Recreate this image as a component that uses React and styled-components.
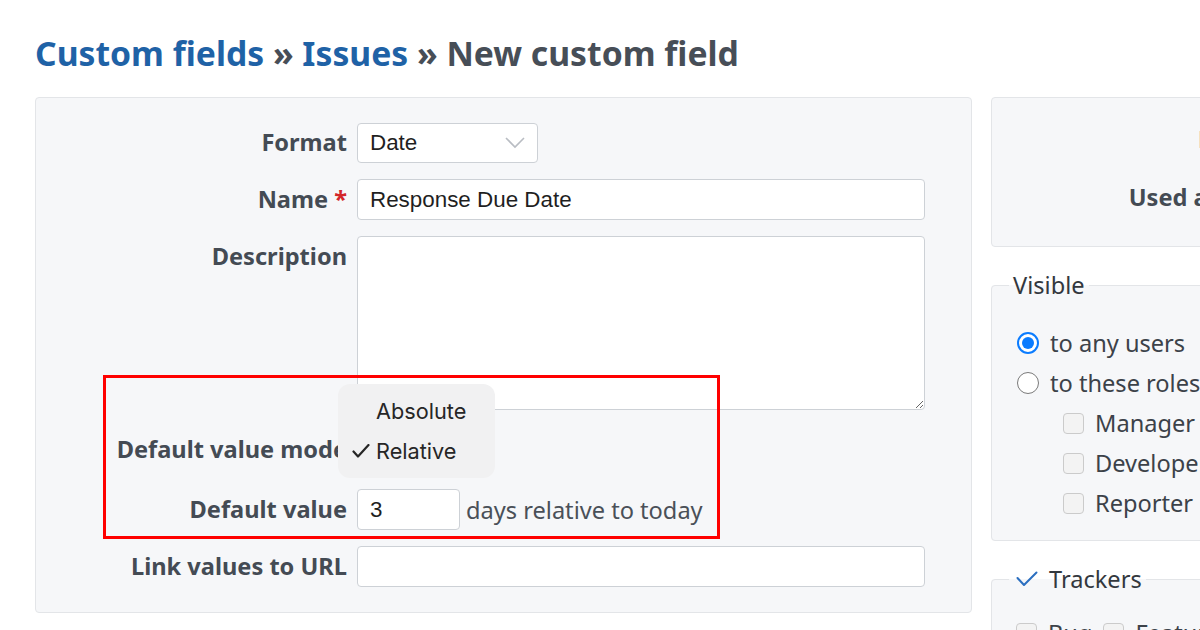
import React from "react";
import styled, { createGlobalStyle } from "styled-components";

const GlobalStyle = createGlobalStyle`
  html, body { margin: 0; padding: 0; background: #ffffff; }
  body {
    width: 1200px; height: 630px; overflow: hidden;
    font-family: "Noto Sans", "Open Sans", sans-serif;
    color: #3f464f;
  }
  * { box-sizing: border-box; }
`;

const Page = styled.div`
  padding: 33px 0 0 35px;
  width: 1600px;
`;

const Title = styled.h2`
  margin: 0 0 24px 0;
  font-family: "Noto Sans", sans-serif;
  font-weight: 700;
  font-size: 33.7px;
  line-height: 40px;
  color: #474e57;
  white-space: nowrap;
`;

const TitleLink = styled.a`
  color: #1f62a6;
  text-decoration: none;
`;

const Columns = styled.div`
  display: flex;
  align-items: flex-start;
  gap: 19px;
`;

const LeftBox = styled.div`
  position: relative;
  width: 937px;
  background: #f6f7f9;
  border: 1px solid #e3e5e8;
  border-radius: 4px;
  padding: 24px 46px 25px 0;
  display: flex;
  flex-direction: column;
  gap: 16px;
`;

const Row = styled.div`
  position: relative;
  display: flex;
  align-items: ${(p) => (p.$top ? "flex-start" : "center")};
  gap: 10px;
  min-height: ${(p) => p.$h || 40}px;
`;

const Label = styled.label`
  flex: 0 0 ${(p) => p.$w || 311}px;
  text-align: right;
  font-weight: 700;
  font-size: 23.6px;
  line-height: 41px;
  color: #444b54;
  white-space: nowrap;
`;

const Req = styled.span`
  color: #d3262a;
`;

const fieldBase = `
  height: 41px;
  background: #ffffff;
  border: 1px solid #cdd1d6;
  border-radius: 4px;
  font-family: "Liberation Sans", Arial, sans-serif;
  font-size: 22.4px;
  color: #1f1f1f;
  padding: 0 12px;
  outline: none;
`;

const TextInput = styled.input`
  ${fieldBase}
  flex: ${(p) => (p.$width ? `0 0 ${p.$width}px` : "1 1 auto")};
  width: ${(p) => (p.$width ? `${p.$width}px` : "auto")};
  min-width: 0;
`;

const TextArea = styled.textarea`
  ${fieldBase}
  flex: 1 1 auto;
  height: 174px;
  resize: vertical;
  padding: 8px 12px;
`;

const SelectBox = styled.div`
  ${fieldBase}
  flex: 0 0 ${(p) => p.$width}px;
  height: 40px;
  display: flex;
  align-items: center;
  justify-content: space-between;
  padding: 0 12px 0 12px;
`;

const Chevron = () => (
  <svg width="20" height="12" viewBox="0 0 20 12">
    <path d="M1 1 L10 10 L19 1" fill="none" stroke="#b9bdc3" strokeWidth="1.6" />
  </svg>
);

const Hint = styled.span`
  font-size: 23.6px;
  color: #4a5058;
  margin-left: -4px;
  white-space: nowrap;
`;

const Menu = styled.div`
  position: absolute;
  left: 302px;
  top: -42px;
  width: 157px;
  height: 94px;
  background: #f1f1f2;
  border-radius: 12px;
  padding: 7px 0;
  display: flex;
  flex-direction: column;
  z-index: 2;
`;

const MenuItem = styled.div`
  position: relative;
  height: 40px;
  display: flex;
  align-items: center;
  padding-left: 38px;
  font-family: Inter, "Liberation Sans", sans-serif;
  font-size: 21.7px;
  color: #262626;
`;

const MenuCheck = styled.svg`
  position: absolute;
  left: 14px;
  top: 13px;
`;

const Highlight = styled.div`
  position: absolute;
  left: 67px;
  top: 277px;
  width: 617px;
  height: 164px;
  border: 3px solid #ff0000;
  pointer-events: none;
  z-index: 3;
`;

const RightCol = styled.div`
  width: 560px;
  display: flex;
  flex-direction: column;
`;

const RightBox = styled.div`
  background: #f6f7f9;
  border: 1px solid #e3e5e8;
  border-radius: 4px;
  padding: 21px 0 29px 0;
  display: flex;
  flex-direction: column;
  gap: 17px;
  height: 150px;
`;

const RightRow = styled.div`
  display: flex;
  align-items: center;
  gap: 10px;
  height: 41px;
`;

const Fieldset = styled.fieldset`
  margin: ${(p) => p.$mt}px 0 0 0;
  padding: 0;
  background: #f6f7f9;
  border: 1px solid #e3e5e8;
  border-radius: 4px;
  min-width: 0;
`;

const Legend = styled.legend`
  padding: 0 4px;
  margin-left: 17px;
  font-size: 23.6px;
  line-height: 28px;
  color: #33383e;
  display: flex;
  align-items: center;
  gap: 11px;
`;

const LegendCheck = styled.svg`
  margin-left: 3px;
`;

const FieldBody = styled.div`
  padding: ${(p) => p.$pad};
`;

const OptionRow = styled.div`
  display: flex;
  align-items: center;
  gap: 11px;
  height: 40px;
  padding-left: ${(p) => p.$indent || 0}px;
  font-size: 23.6px;
  color: #3c4249;
  white-space: nowrap;
`;

const Radio = styled.span`
  flex: 0 0 22px;
  width: 22px;
  height: 22px;
  border-radius: 50%;
  background: #ffffff;
  border: ${(p) => (p.$on ? "2px solid #0b7cff" : "1.5px solid #7a7a7a")};
  display: flex;
  align-items: center;
  justify-content: center;
  &::after {
    content: "";
    display: ${(p) => (p.$on ? "block" : "none")};
    width: 12px;
    height: 12px;
    border-radius: 50%;
    background: #0b7cff;
  }
`;

const Check = styled.span`
  flex: 0 0 21px;
  width: 21px;
  height: 21px;
  border-radius: 4px;
  background: #f3f3f3;
  border: 1px solid #cbcbcb;
`;

const InlineChecks = styled.div`
  display: flex;
  align-items: center;
  gap: 11px;
  height: 40px;
  font-size: 23.6px;
  color: #3c4249;
  white-space: nowrap;
`;

export default function App() {
  return (
    <>
      <GlobalStyle />
      <Page>
        <Title>
          <TitleLink href="#">Custom fields</TitleLink> » <TitleLink href="#">Issues</TitleLink> » New custom field
        </Title>
        <Columns>
          <LeftBox>
            <Row>
              <Label>Format</Label>
              <SelectBox $width={181}>
                <span>Date</span>
                <Chevron />
              </SelectBox>
            </Row>
            <Row>
              <Label>
                Name <Req>*</Req>
              </Label>
              <TextInput defaultValue="Response Due Date" />
            </Row>
            <Row $top>
              <Label>Description</Label>
              <TextArea />
            </Row>
            <Row $h={47}>
              <Label>Default value mode</Label>
              <SelectBox $width={130}>
                <span>Relative</span>
              </SelectBox>
              <Menu>
                <MenuItem>Absolute</MenuItem>
                <MenuItem>
                  <MenuCheck width="18" height="14" viewBox="0 0 18 14">
                    <path d="M1.5 7.5 L6 12.5 L16.5 1" fill="none" stroke="#262626" strokeWidth="2.2" strokeLinecap="round" strokeLinejoin="round" />
                  </MenuCheck>
                  Relative
                </MenuItem>
              </Menu>
            </Row>
            <Row>
              <Label>Default value</Label>
              <TextInput $width={103} defaultValue="3" />
              <Hint>days relative to today</Hint>
            </Row>
            <Row>
              <Label>Link values to URL</Label>
              <TextInput defaultValue="" />
            </Row>
            <Highlight />
          </LeftBox>
          <RightCol>
            <RightBox>
              <RightRow>
                <Label $w={312}>Required</Label>
                <Check />
              </RightRow>
              <RightRow>
                <Label $w={312}>Used as a filter</Label>
                <Check />
              </RightRow>
            </RightBox>
            <Fieldset $mt={24}>
              <Legend>Visible</Legend>
              <FieldBody $pad="24px 0 17px 25px">
                <OptionRow>
                  <Radio $on />
                  to any users
                </OptionRow>
                <OptionRow>
                  <Radio />
                  to these roles only:
                </OptionRow>
                <OptionRow $indent={46}>
                  <Check />
                  Manager
                </OptionRow>
                <OptionRow $indent={46}>
                  <Check />
                  Developer
                </OptionRow>
                <OptionRow $indent={46}>
                  <Check />
                  Reporter
                </OptionRow>
              </FieldBody>
            </Fieldset>
            <Fieldset $mt={24}>
              <Legend>
                <LegendCheck width="22" height="16" viewBox="0 0 22 16">
                  <path d="M1.5 7 L8 14 L20.5 1.5" fill="none" stroke="#2b6fc0" strokeWidth="2" strokeLinecap="round" strokeLinejoin="round" />
                </LegendCheck>
                Trackers
              </Legend>
              <FieldBody $pad="20px 0 16px 24px">
                <InlineChecks>
                  <Check />
                  <span>Bug</span>
                  <Check />
                  <span>Feature</span>
                  <Check />
                  <span>Support</span>
                </InlineChecks>
              </FieldBody>
            </Fieldset>
          </RightCol>
        </Columns>
      </Page>
    </>
  );
}
